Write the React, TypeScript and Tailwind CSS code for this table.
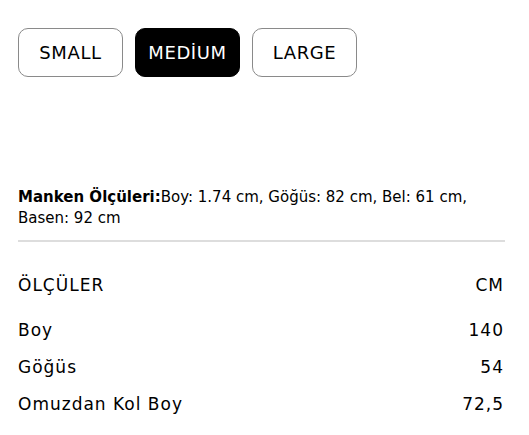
const sizes = ["SMALL", "MEDİUM", "LARGE"];

const rows = [
    { name: "Boy", value: "140" },
    { name: "Göğüs", value: "54" },
    { name: "Omuzdan Kol Boy", value: "72,5" },
];

export default function App() {
    return (
        <div className="w-[529px] h-[435px] bg-white text-black font-['DejaVu_Sans',sans-serif] px-[18px] pt-[28px]">
            <div className="flex gap-[12px]">
                {sizes.map((s) => (
                    <button
                        key={s}
                        className={
                            s === "MEDİUM"
                                ? "w-[105px] h-[49px] rounded-[10px] bg-black text-white text-[18px] tracking-[0.6px] border border-black"
                                : "w-[105px] h-[49px] rounded-[10px] bg-white text-black text-[18px] tracking-[0.6px] border border-[#8a8a8a]"
                        }
                    >
                        {s}
                    </button>
                ))}
            </div>

            <p className="mt-[110px] text-[15px] leading-[21px] pr-[20px]">
                <b>Manken Ölçüleri:</b>Boy: 1.74 cm, Göğüs: 82 cm, Bel: 61 cm, Basen: 92 cm
            </p>

            <div className="mt-[11px] mr-[6px] h-[2px] bg-[#dddddd]" />

            <div className="mr-[7px] mt-[31px] text-[17px] tracking-[1px]">
                <div className="flex justify-between h-[25px] items-center">
                    <span>ÖLÇÜLER</span>
                    <span>CM</span>
                </div>
                <div className="mt-[20px] flex flex-col gap-[12px]">
                    {rows.map((r) => (
                        <div key={r.name} className="flex justify-between h-[25px] items-center">
                            <span>{r.name}</span>
                            <span>{r.value}</span>
                        </div>
                    ))}
                </div>
            </div>
        </div>
    );
}
